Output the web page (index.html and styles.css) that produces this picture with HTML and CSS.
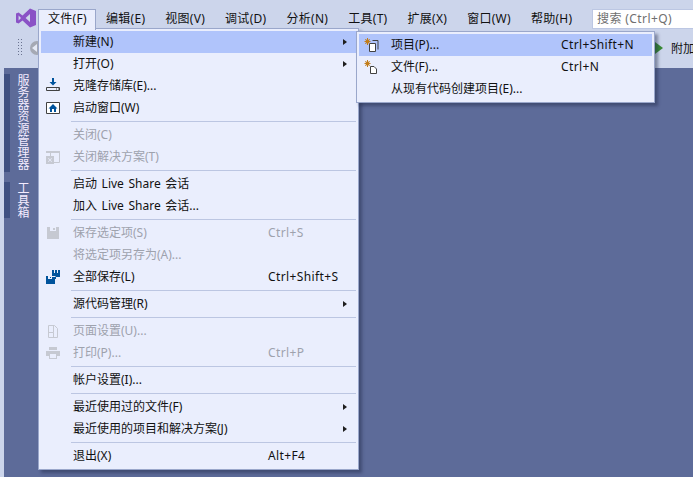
FILE: index.html
```html
<!DOCTYPE html>
<html lang="zh-CN">
<head>
    <meta charset="UTF-8">
    <title>Visual Studio</title>
    <link rel="stylesheet" href="styles.css">
</head>
<body>
    <div class="window">
        <div class="menubar">
            <svg class="logo" width="20" height="20" viewBox="0 0 20 20">
                <path fill="#8a52c6" d="M14 0.5 L20 3 V17 L14 19.5 L6.5 12.6 L2.6 15.6 L0 14.4 V5.6 L2.6 4.4 L6.5 7.4 Z M14 6 L9.600 10 L14 14 Z M2.600 7.600 V12.400 L5 10 Z" fill-rule="evenodd"/>
            </svg>
            <div class="menu-item active">文件(F)</div>
            <div class="menu-item">编辑(E)</div>
            <div class="menu-item">视图(V)</div>
            <div class="menu-item">调试(D)</div>
            <div class="menu-item">分析(N)</div>
            <div class="menu-item">工具(T)</div>
            <div class="menu-item">扩展(X)</div>
            <div class="menu-item">窗口(W)</div>
            <div class="menu-item">帮助(H)</div>
            <div class="search">搜索 (Ctrl+Q)</div>
        </div>

        <div class="toolbar">
            <div class="grip"></div>
            <div class="back"></div>
            <div class="attach">
                <span class="play"></span>
                <span>附加</span>
            </div>
        </div>

        <div class="main">
            <div class="side">
                <div class="side-tab tab-server">服务器资源管理器</div>
                <div class="side-tab tab-tools">工具箱</div>
            </div>
        </div>
    </div>

    <div class="menu file-menu">
        <div class="row hover"><span class="icon"></span><span class="label">新建(N)</span><span class="arrow"></span></div>
        <div class="row"><span class="icon"></span><span class="label">打开(O)</span><span class="arrow"></span></div>
        <div class="row">
            <span class="icon">
                <svg width="16" height="16" viewBox="0 0 16 16">
                    <path fill="#00539c" d="M7 0h2v4h2.500L8 7.500 4.500 4H7z"/>
                    <path fill="none" stroke="#424242" d="M1.500 9.500h13v3h-13z"/>
                    <path fill="#424242" d="M11 10.500h1v1h-1zM13 10.500h1v1h-1z"/>
                </svg>
            </span>
            <span class="label">克隆存储库(E)...</span>
        </div>
        <div class="row">
            <span class="icon">
                <svg width="16" height="16" viewBox="0 0 16 16">
                    <path fill="#fff" stroke="#424242" d="M1.500 2.500h13v11h-13z"/>
                    <path fill="#00539c" d="M8 4l4.500 4.500H11V12H5V8.500H3.500z"/>
                    <path fill="#fff" d="M7 9h2v3H7z"/>
                </svg>
            </span>
            <span class="label">启动窗口(W)</span>
        </div>
        <div class="sep"></div>
        <div class="row off"><span class="icon"></span><span class="label">关闭(C)</span></div>
        <div class="row off">
            <span class="icon">
                <svg width="16" height="16" viewBox="0 0 16 16">
                    <path fill="none" stroke="#c6c9d2" d="M5.500 8V2.500h9v11H9"/>
                    <path fill="#c6c9d2" d="M1 2h14v2H1zM1 7h8v8H1z"/>
                    <path fill="#eaeefd" d="M3.500 9l1.500 1.500L6.500 9l.5.500L5.500 11 7 12.500l-.5.500L5 11.500 3.500 13l-.5-.5L4.500 11 3 9.500z"/>
                </svg>
            </span>
            <span class="label">关闭解决方案(T)</span>
        </div>
        <div class="sep"></div>
        <div class="row"><span class="icon"></span><span class="label spaced">启动 Live Share 会话</span></div>
        <div class="row"><span class="icon"></span><span class="label spaced">加入 Live Share 会话...</span></div>
        <div class="sep"></div>
        <div class="row off">
            <span class="icon">
                <svg width="16" height="16" viewBox="0 0 16 16">
                    <path fill="#c6c9d2" d="M2 2h12v12H2z"/>
                    <path fill="#eaeefd" d="M5 2h6v4H5z"/>
                    <path fill="#c6c9d2" d="M8 3h2v2H8z"/>
                </svg>
            </span>
            <span class="label">保存选定项(S)</span><span class="keys">Ctrl+S</span>
        </div>
        <div class="row off"><span class="icon"></span><span class="label">将选定项另存为(A)...</span></div>
        <div class="row">
            <span class="icon">
                <svg width="16" height="16" viewBox="0 0 16 16">
                    <path fill="#00539c" d="M7 1h8v7h-4v2H7zM1 7h9v8H1z"/>
                    <path fill="#eaeefd" d="M9 1h1v3H9zM12 1h1v3h-1zM3 7h4v3H3zM6.500 8v-1h4v1z"/>
                    <path fill="#00539c" d="M5 8h1v1H5z"/>
                </svg>
            </span>
            <span class="label">全部保存(L)</span><span class="keys">Ctrl+Shift+S</span>
        </div>
        <div class="sep"></div>
        <div class="row"><span class="icon"></span><span class="label">源代码管理(R)</span><span class="arrow"></span></div>
        <div class="sep"></div>
        <div class="row off">
            <span class="icon">
                <svg width="16" height="16" viewBox="0 0 16 16">
                    <path fill="none" stroke="#c6c9d2" d="M3.500 2.500h6l3 3v9h-9zM3.500 9.500h5v-7M8.500 9.500v5"/>
                </svg>
            </span>
            <span class="label">页面设置(U)...</span>
        </div>
        <div class="row off">
            <span class="icon">
                <svg width="16" height="16" viewBox="0 0 16 16">
                    <path fill="#c6c9d2" d="M4 2h8v3H4zM1 6h14v5h-3v3H4v-3H1z"/>
                    <path fill="#eaeefd" d="M5 9h6v4H5z"/>
                </svg>
            </span>
            <span class="label">打印(P)...</span><span class="keys">Ctrl+P</span>
        </div>
        <div class="sep"></div>
        <div class="row"><span class="icon"></span><span class="label">帐户设置(I)...</span></div>
        <div class="sep"></div>
        <div class="row"><span class="icon"></span><span class="label">最近使用过的文件(F)</span><span class="arrow"></span></div>
        <div class="row"><span class="icon"></span><span class="label">最近使用的项目和解决方案(J)</span><span class="arrow"></span></div>
        <div class="sep"></div>
        <div class="row"><span class="icon"></span><span class="label">退出(X)</span><span class="keys">Alt+F4</span></div>
    </div>

    <div class="menu sub-menu">
        <div class="row hover">
            <span class="icon sub-icon">
                <svg width="16" height="16" viewBox="0 0 16 16">
                    <path fill="#fff" stroke="#424242" d="M5.500 6.500h6v8h-6z"/>
                    <path fill="none" stroke="#424242" d="M8.500 3.500h5.500v9"/>
                    <path fill="#c27d1a" d="M3 1h1v2l1.500-1 .5.500L4.800 4H6.500v1H4.800L6 6.500 5.500 7 4 6v2H3V6L1.500 7 1 6.500 2.200 5H.5V4h1.700L1 2.500l.5-.5L3 3z"/>
                </svg>
            </span>
            <span class="label sub-label">项目(P)...</span><span class="keys">Ctrl+Shift+N</span>
        </div>
        <div class="row">
            <span class="icon sub-icon">
                <svg width="16" height="16" viewBox="0 0 16 16">
                    <path fill="#fff" stroke="#424242" d="M6.500 7.500h3.500l2.500 2.500v4.500h-6z"/>
                    <path fill="#c27d1a" d="M3 1h1v2l1.500-1 .5.500L4.800 4H6.500v1H4.800L6 6.500 5.500 7 4 6v2H3V6L1.500 7 1 6.500 2.200 5H.5V4h1.700L1 2.500l.5-.5L3 3z"/>
                </svg>
            </span>
            <span class="label sub-label">文件(F)...</span><span class="keys">Ctrl+N</span>
        </div>
        <div class="row"><span class="icon sub-icon"></span><span class="label sub-label">从现有代码创建项目(E)...</span></div>
    </div>
</body>
</html>
```

FILE: styles.css
```css
html, body{
    margin: 0;
    padding: 0;
}

body{
    position: relative;
    width: 693px;
    height: 477px;
    overflow: hidden;
    background-color: #ccd5eb;
    font-family: "Noto Sans", "Noto Sans CJK SC", sans-serif;
    font-size: 12px;
    color: #111;
}

.window{
    display: flex;
    flex-direction: column;
    height: 477px;
}

.menubar{
    display: flex;
    align-items: flex-start;
    height: 33px;
    padding: 9px 0 0 16px;
    box-sizing: border-box;
}

.logo{
    flex: none;
    margin-top: -1px;
    margin-right: 2px;
}

.menu-item{
    height: 20px;
    padding: 0 10px;
    line-height: 20px;
    letter-spacing: 0.28px;
    white-space: nowrap;
}

.menu-item.active{
    position: relative;
    z-index: 3;
    height: 21px;
    box-sizing: border-box;
    width: 58px;
    padding: 0 9px;
    line-height: 18px;
    background-color: #eaeefd;
    border: 1px solid #9aa7cb;
    border-bottom: none;
}

.search{
    position: absolute;
    left: 592px;
    top: 9px;
    width: 101px;
    height: 20px;
    padding-left: 4px;
    box-sizing: border-box;
    line-height: 18px;
    letter-spacing: 0.4px;
    background-color: #fff;
    border: 1px solid #bcc7e3;
    border-right: none;
    color: #6f6f6f;
    white-space: nowrap;
    overflow: hidden;
}

.toolbar{
    position: relative;
    display: flex;
    align-items: center;
    height: 35px;
    padding: 0 0 5px 18px;
    box-sizing: border-box;
}

.grip{
    width: 5px;
    height: 18px;
    background-image: radial-gradient(circle at 0.5px 0.5px, #6a7390 0.7px, transparent 0.8px);
    background-size: 3px 3px;
}

.back{
    position: relative;
    width: 14px;
    height: 14px;
    margin-left: 7px;
    border-radius: 50%;
    background-color: #a5a9b4;
}

.back::before{
    content: "";
    position: absolute;
    left: 2px;
    top: 3px;
    width: 0;
    height: 0;
    border-right: 5px solid #e6eaf6;
    border-top: 4px solid transparent;
    border-bottom: 4px solid transparent;
}

.attach{
    position: absolute;
    left: 655px;
    top: 6px;
    display: flex;
    align-items: center;
    gap: 8px;
    white-space: nowrap;
}

.play{
    width: 0;
    height: 0;
    border-left: 8px solid #388a34;
    border-top: 6px solid transparent;
    border-bottom: 6px solid transparent;
}

.main{
    flex: 1;
    margin-left: 4px;
    background-color: #5d6b99;
}

.side{
    display: flex;
    flex-direction: column;
    gap: 10px;
    padding-top: 6px;
}

.side-tab{
    writing-mode: vertical-rl;
    width: 26px;
    box-sizing: border-box;
    padding-left: 4px;
    border-left: 6px solid #3f5081;
    color: #f4ecff;
    line-height: 16px;
}

.tab-server{
    height: 98px;
}

.tab-tools{
    height: 36px;
}

.menu{
    position: absolute;
    z-index: 2;
    box-sizing: border-box;
    background-color: #eaeefd;
    border: 1px solid #9aa7cb;
    padding: 2px;
    box-shadow: 3px 3px 3px rgba(30, 40, 70, 0.45);
}

.file-menu{
    left: 38px;
    top: 28px;
    width: 321px;
    height: 442px;
}

.sub-menu{
    z-index: 4;
    left: 356px;
    top: 31px;
    width: 299px;
    height: 72px;
}

.row{
    position: relative;
    display: flex;
    align-items: center;
    height: 22px;
    line-height: 22px;
    white-space: nowrap;
}

.hover{
    background-color: #b0c4fb;
}

.off{
    color: #9ea2ad;
}

.icon{
    flex: none;
    display: flex;
    align-items: center;
    width: 32px;
    height: 22px;
    box-sizing: border-box;
    padding-left: 4px;
}

.sub-icon{
    padding-left: 5px;
}

.label{
    flex: none;
    width: 195px;
}

.spaced{
    word-spacing: 1.5px;
}

.keys{
    flex: none;
    letter-spacing: 0.38px;
}

.sub-label{
    width: 170px;
}

.arrow{
    position: absolute;
    right: 9px;
    top: 8px;
    width: 0;
    height: 0;
    border-left: 4px solid #1e1e1e;
    border-top: 3.5px solid transparent;
    border-bottom: 3.5px solid transparent;
}

.sep{
    height: 1px;
    margin: 2px 0 2px 30px;
    background-color: #bcc6e2;
}
```
